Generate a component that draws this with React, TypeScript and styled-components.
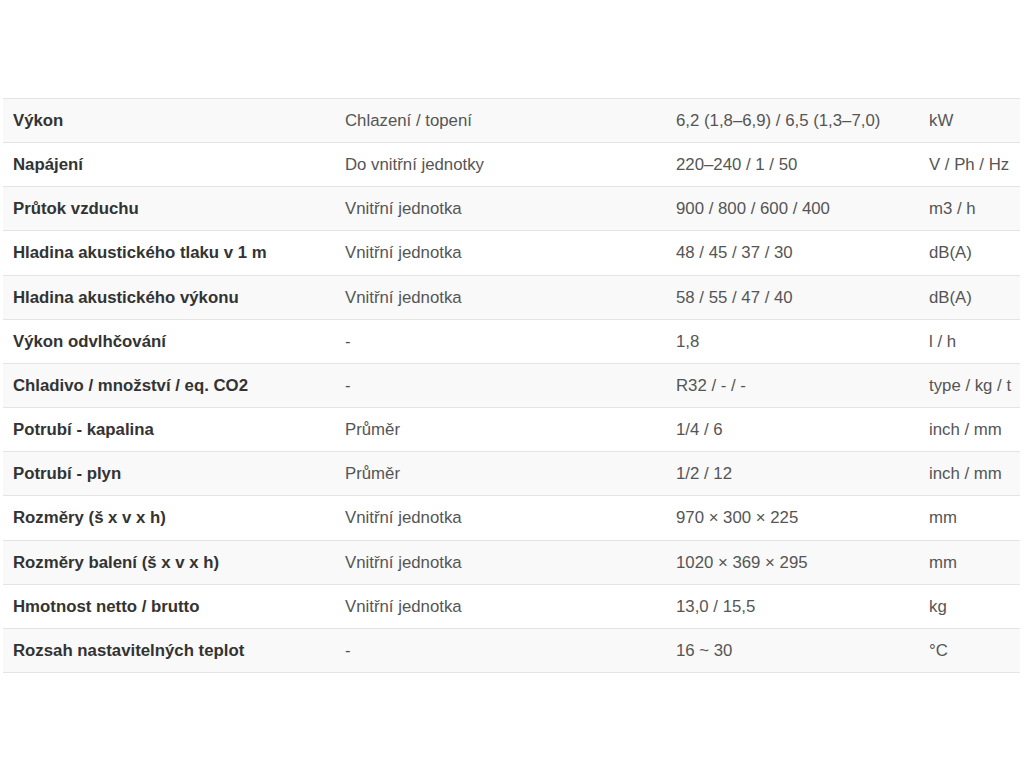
import React from 'react';
import styled, { createGlobalStyle } from 'styled-components';

const GlobalStyle = createGlobalStyle`
  body {
    margin: 0;
    background: #fff;
    font-family: 'Liberation Sans', Arial, sans-serif;
  }
`;

const Root = styled.div`
  padding: 98px 4px 0 3px;
`;

const Table = styled.table`
  width: 100%;
  table-layout: fixed;
  border-collapse: collapse;
  font-size: 16.8px;
  line-height: 23.15px;
  color: #555;
  border-bottom: 1px solid #e4e4e4;
`;

const Row = styled.tr`
  border-top: 1px solid #e4e4e4;
  &:nth-child(odd) {
    background: #f9f9f9;
  }
`;

const Cell = styled.td<{ $width: number }>`
  box-sizing: border-box;
  width: ${props => props.$width}px;
  padding: 10px 10px;
  text-align: left;
  vertical-align: top;
  white-space: nowrap;
`;

const Label = styled(Cell)`
  font-weight: bold;
  color: #333;
`;

const rows: [string, string, string, string][] = [
  ['Výkon', 'Chlazení / topení', '6,2 (1,8–6,9) / 6,5 (1,3–7,0)', 'kW'],
  ['Napájení', 'Do vnitřní jednotky', '220–240 / 1 / 50', 'V / Ph / Hz'],
  ['Průtok vzduchu', 'Vnitřní jednotka', '900 / 800 / 600 / 400', 'm3 / h'],
  ['Hladina akustického tlaku v 1 m', 'Vnitřní jednotka', '48 / 45 / 37 / 30', 'dB(A)'],
  ['Hladina akustického výkonu', 'Vnitřní jednotka', '58 / 55 / 47 / 40', 'dB(A)'],
  ['Výkon odvlhčování', '-', '1,8', 'l / h'],
  ['Chladivo / množství / eq. CO2', '-', 'R32 / - / -', 'type / kg / t'],
  ['Potrubí - kapalina', 'Průměr', '1/4 / 6', 'inch / mm'],
  ['Potrubí - plyn', 'Průměr', '1/2 / 12', 'inch / mm'],
  ['Rozměry (š x v x h)', 'Vnitřní jednotka', '970 × 300 × 225', 'mm'],
  ['Rozměry balení (š x v x h)', 'Vnitřní jednotka', '1020 × 369 × 295', 'mm'],
  ['Hmotnost netto / brutto', 'Vnitřní jednotka', '13,0 / 15,5', 'kg'],
  ['Rozsah nastavitelných teplot', '-', '16 ~ 30', '°C'],
];

const App = () => (
  <>
    <GlobalStyle />
    <Root>
      <Table>
        <tbody>
          {rows.map((r, i) => (
            <Row key={i}>
              <Label $width={332}>{r[0]}</Label>
              <Cell $width={331}>{r[1]}</Cell>
              <Cell $width={253}>{r[2]}</Cell>
              <Cell $width={101}>{r[3]}</Cell>
            </Row>
          ))}
        </tbody>
      </Table>
    </Root>
  </>
);

export default App;
